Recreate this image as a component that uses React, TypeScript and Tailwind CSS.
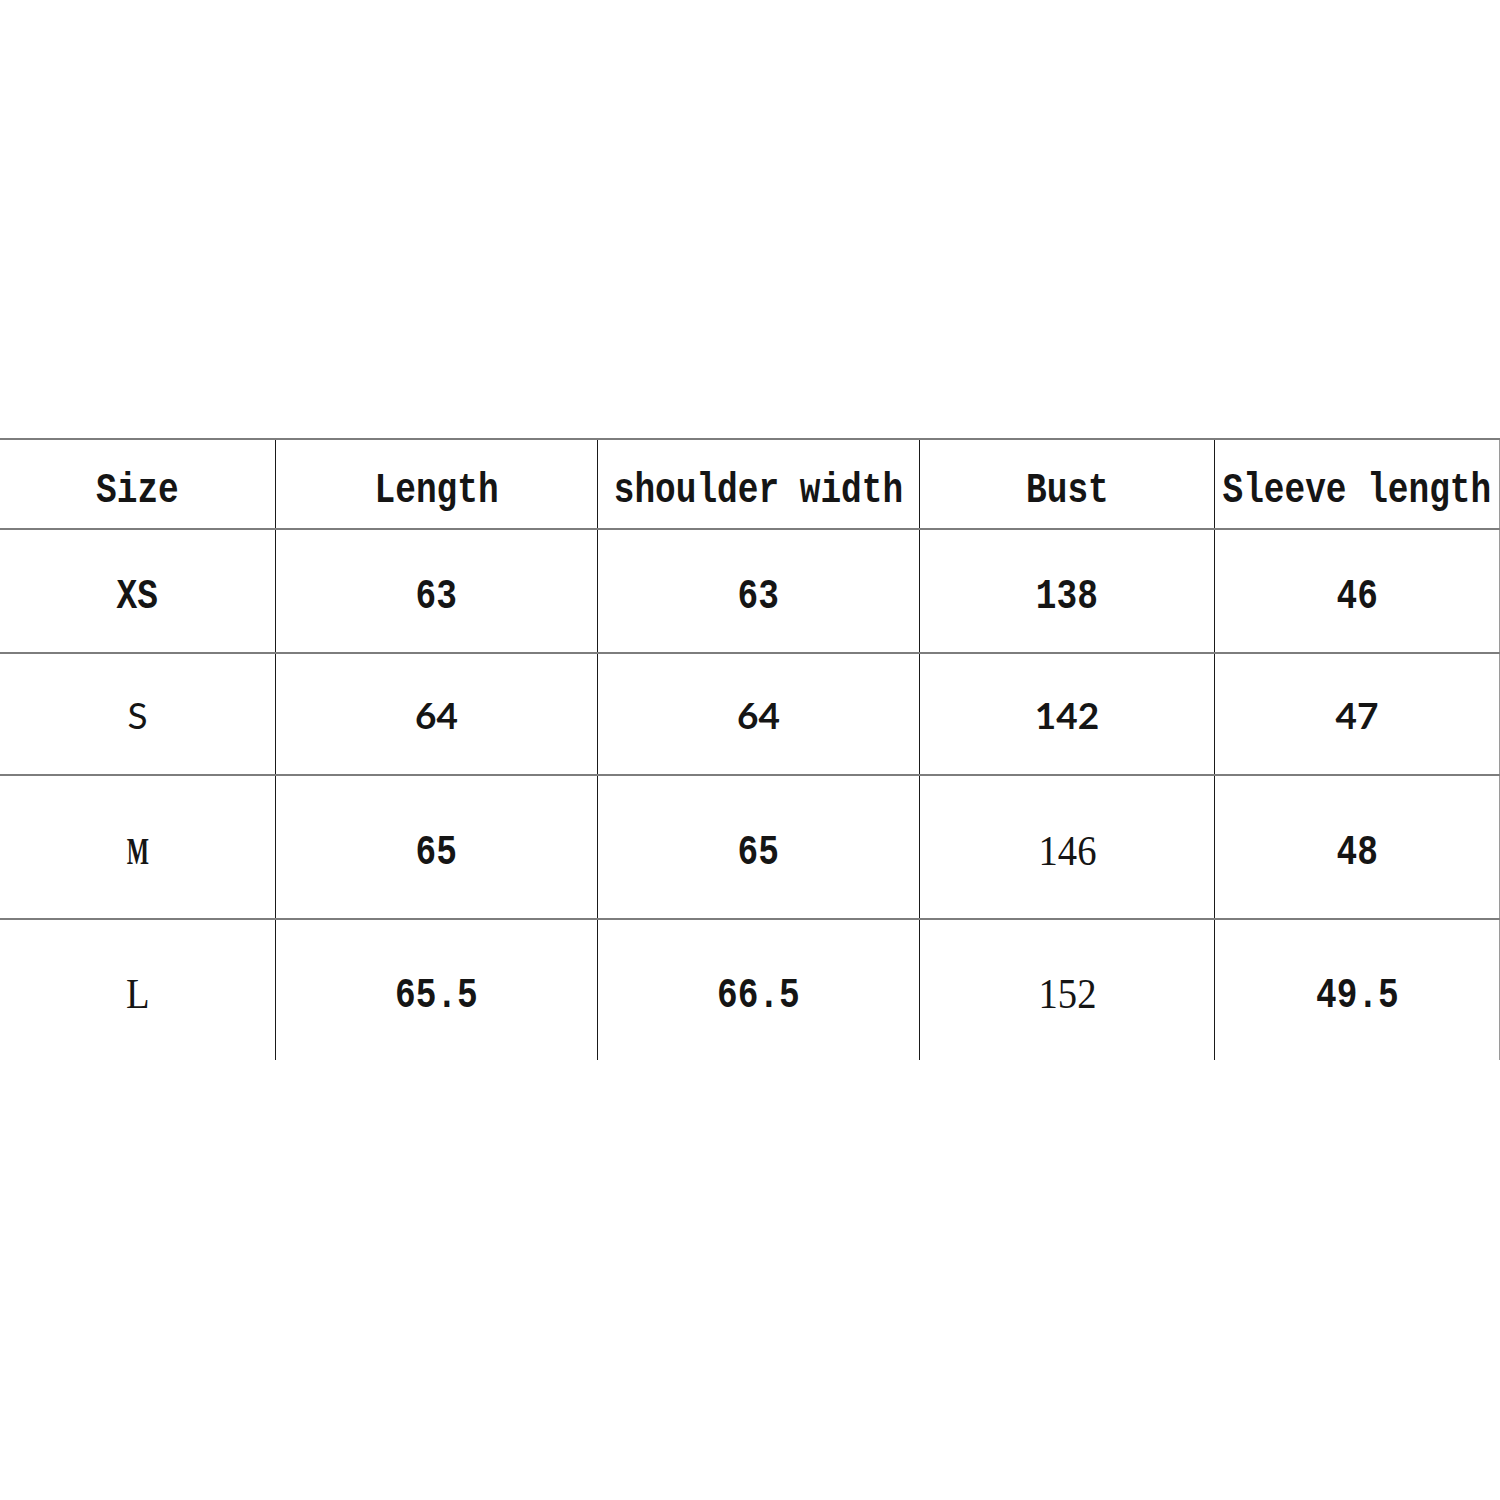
import React from 'react';

type Face = 'hei' | 'sans' | 'sansBold' | 'serif' | 'serifBold';

interface CellData {
  text: string;
  face: Face;
}

const rows: { height: string; cells: CellData[] }[] = [
  {
    height: 'h-[124px]',
    cells: [
      { text: 'XS', face: 'hei' },
      { text: '63', face: 'hei' },
      { text: '63', face: 'hei' },
      { text: '138', face: 'hei' },
      { text: '46', face: 'hei' },
    ],
  },
  {
    height: 'h-[122px]',
    cells: [
      { text: 'S', face: 'sans' },
      { text: '64', face: 'sansBold' },
      { text: '64', face: 'sansBold' },
      { text: '142', face: 'sansBold' },
      { text: '47', face: 'sansBold' },
    ],
  },
  {
    height: 'h-[144px]',
    cells: [
      { text: 'M', face: 'serifBold' },
      { text: '65', face: 'hei' },
      { text: '65', face: 'hei' },
      { text: '146', face: 'serif' },
      { text: '48', face: 'hei' },
    ],
  },
  {
    height: 'h-[142px]',
    cells: [
      { text: 'L', face: 'serif' },
      { text: '65.5', face: 'hei' },
      { text: '66.5', face: 'hei' },
      { text: '152', face: 'serif' },
      { text: '49.5', face: 'hei' },
    ],
  },
];

const headers = ['Size', 'Length', 'shoulder width', 'Bust', 'Sleeve length'];

// SimHei-like narrow mono, Calibri-like sans, SimSun-like serif
const faceClass: Record<Face, string> = {
  hei: "font-['Liberation_Mono',monospace] text-[42px] font-bold scale-x-[0.82] translate-y-[4px]",
  sans: "font-['Lato',sans-serif] text-[37px] font-normal -translate-y-[2px]",
  sansBold: "font-['Lato',sans-serif] text-[37px] font-bold -translate-y-[2px]",
  serif: "font-['Liberation_Serif',serif] text-[42px] font-normal scale-x-[0.92] translate-y-[2px]",
  serifBold: "font-['Liberation_Serif',serif] text-[38px] font-bold scale-x-[0.62] translate-y-[2px]",
};

const headerClass =
  "font-['Liberation_Mono',monospace] text-[42px] font-bold scale-x-[0.82] translate-y-[5px]";

const colClass = [
  'w-[276px] border-r border-[#1a1a1a]',
  'w-[322px] border-r border-[#1a1a1a]',
  'w-[322px] border-r border-[#1a1a1a]',
  'w-[295px] border-r border-[#1a1a1a]',
  'w-[285px] border-r border-[#9a9a9a]',
];

function Cell({ col, children }: { col: number; children: React.ReactNode }) {
  return (
    <div className={`${colClass[col]} h-full flex items-center justify-center pt-1 shrink-0`}>
      {children}
    </div>
  );
}

export default function App() {
  return (
    <div className="w-[1500px] h-[1500px] bg-white pt-[438px] text-[#151515]">
      <div className="flex flex-col">
        <div className="flex h-[90px] border-t-2 border-[#7d7d7d]">
          {headers.map((h, i) => (
            <Cell key={h} col={i}>
              <span className={`inline-block whitespace-nowrap leading-none ${headerClass}`}>{h}</span>
            </Cell>
          ))}
        </div>
        {rows.map((row, r) => (
          <div key={r} className={`flex ${row.height} border-t-2 border-[#7d7d7d]`}>
            {row.cells.map((c, i) => (
              <Cell key={i} col={i}>
                <span className={`inline-block whitespace-nowrap leading-none ${faceClass[c.face]}`}>
                  {c.text}
                </span>
              </Cell>
            ))}
          </div>
        ))}
      </div>
    </div>
  );
}
